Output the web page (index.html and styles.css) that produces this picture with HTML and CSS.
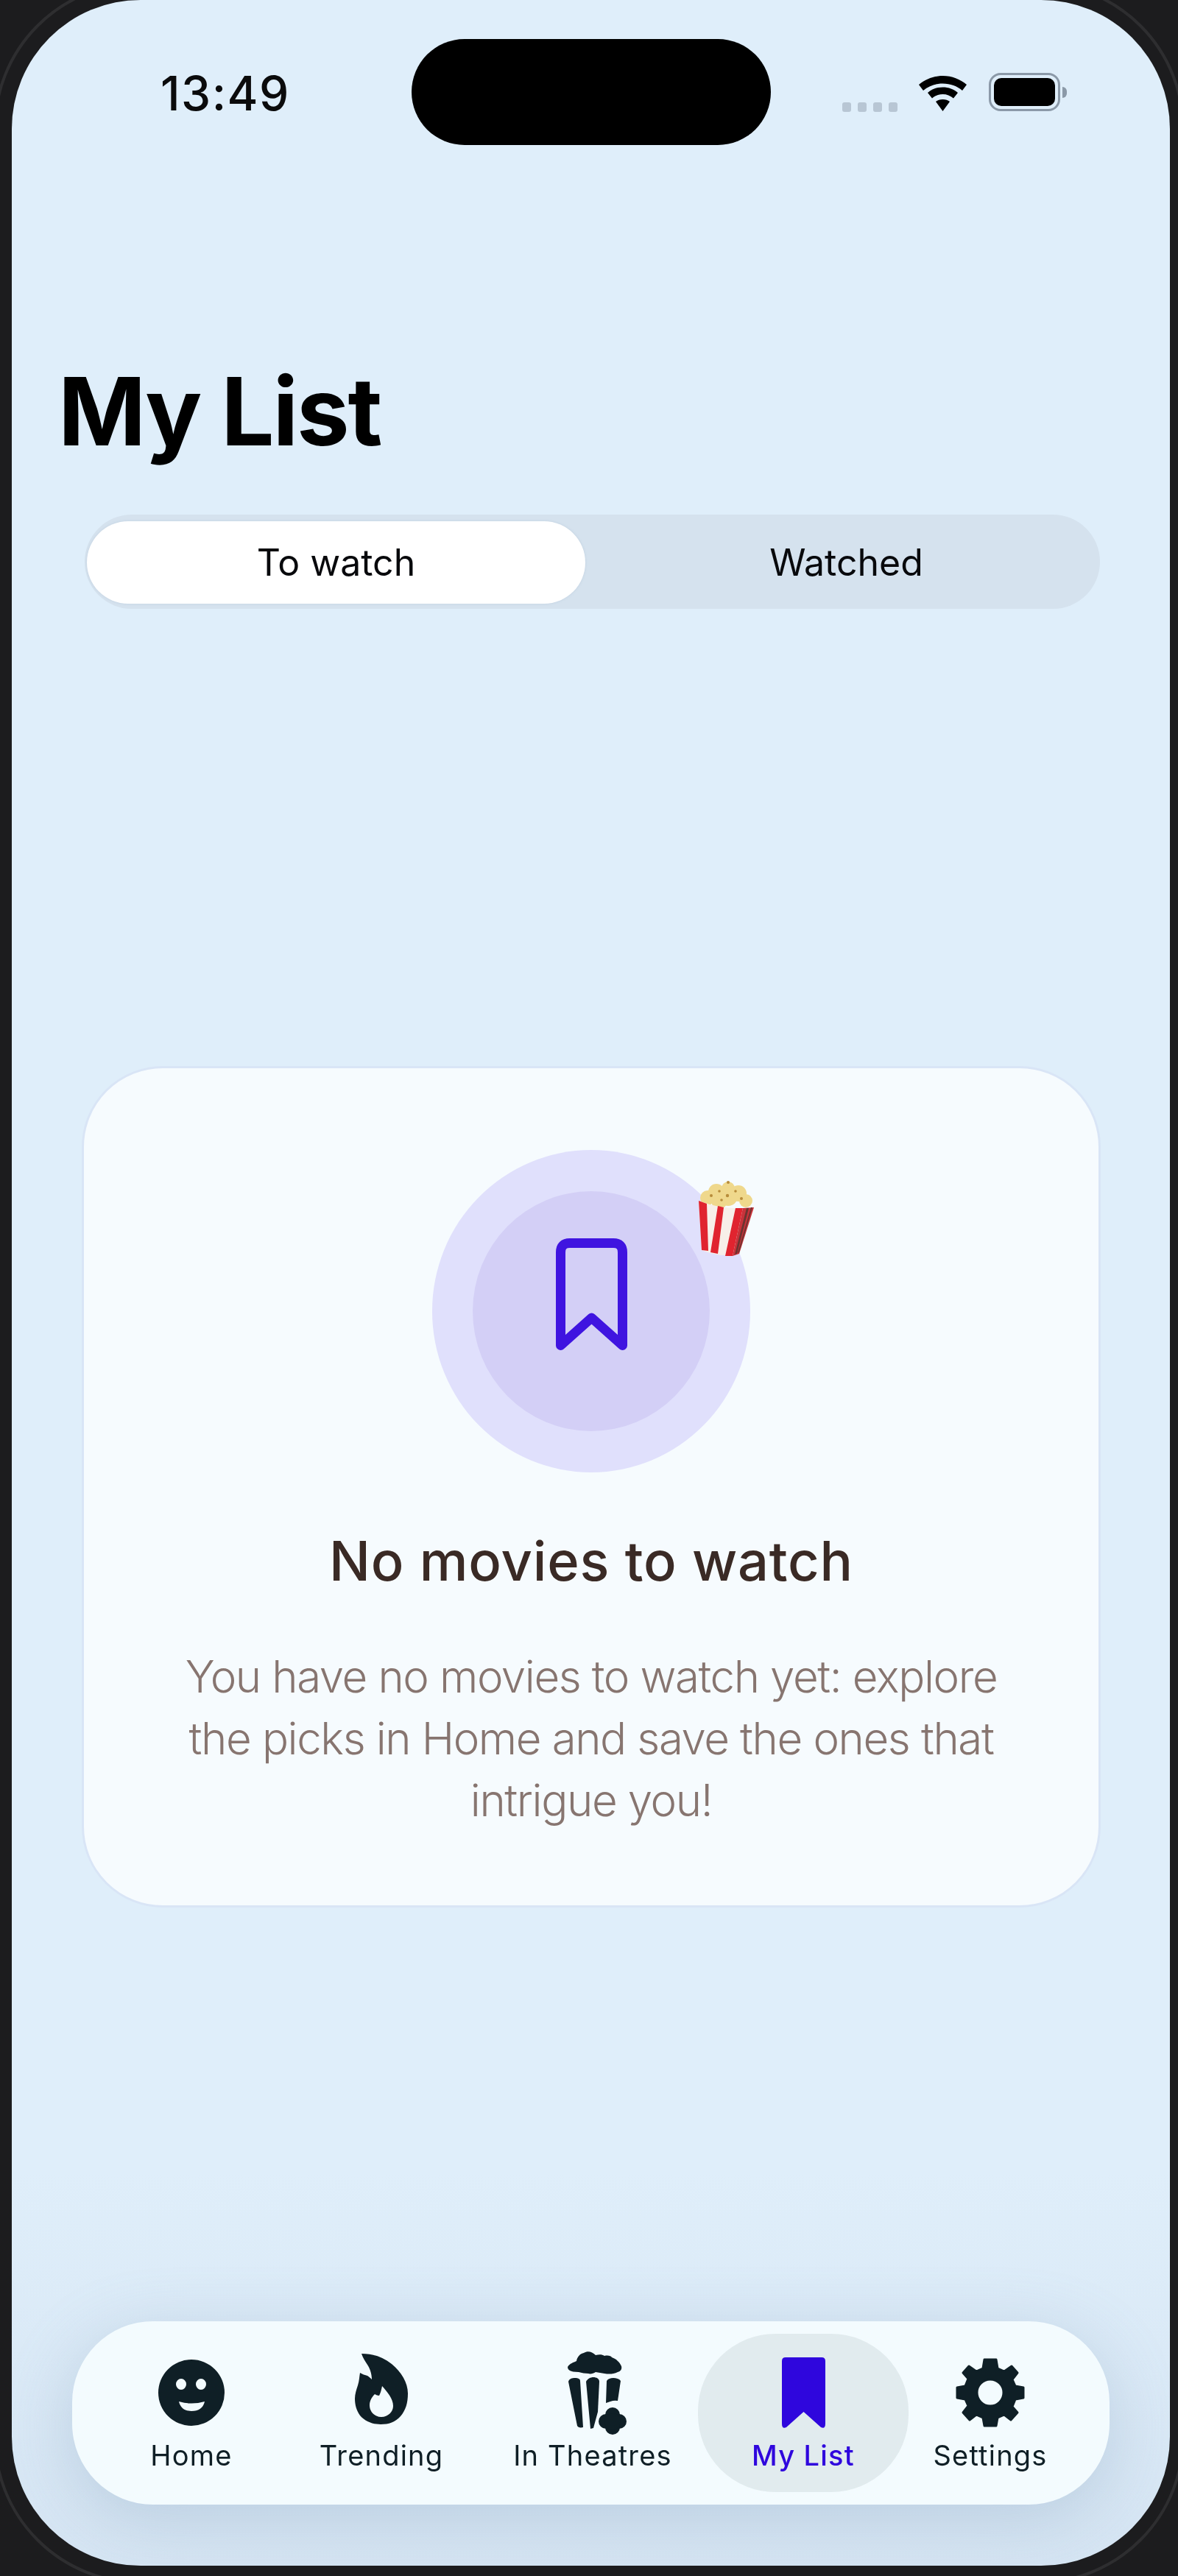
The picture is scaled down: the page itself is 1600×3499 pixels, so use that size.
FILE: index.html
```html
<!DOCTYPE html>
<html lang="en">
<head>
    <meta charset="UTF-8">
    <meta name="viewport" content="width=device-width, initial-scale=1.0">
    <title>My List</title>
    <link rel="stylesheet" href="styles.css">
</head>
<body>
    <div class="screen">
        <div class="status-bar">
            <span class="time">13:49</span>
            <div class="island"></div>
            <div class="status-icons">
                <div class="signal"><i></i><i></i><i></i><i></i></div>
                <svg class="wifi" viewBox="0 0 65 48"><path d="M32.500 0C20 0 9 4.500 0 12l6 8c7-6 16-9.500 26.500-9.500S52 14 59 20l6-8C56 4.500 45 0 32.500 0z"/><path d="M32.500 15.500c-8 0-15 2.500-20.500 7.500l6 7.500c4-3.500 9-5.500 14.500-5.500s10.500 2 14.500 5.500l6-7.500c-5.500-5-12.500-7.500-20.500-7.500z"/><path d="M32.500 32c-4 0-7 1-9.500 3l9.500 13 9.500-13c-2.500-2-5.500-3-9.500-3z"/></svg>
                <div class="battery"><div class="battery-level"></div></div>
                <div class="battery-nub"></div>
            </div>
        </div>

        <h1 class="title">My List</h1>

        <div class="segment">
            <div class="segment-item active">To watch</div>
            <div class="segment-item">Watched</div>
        </div>

        <div class="empty-card">
            <div class="halo">
                <div class="halo-inner">
                    <svg class="bookmark-outline" viewBox="0 0 97 152"><path d="M6.500 145.500V19Q6.500 6.500 19 6.500H78Q90.500 6.500 90.500 19V145.500L48.500 108z"/></svg>
                </div>
                <svg class="popcorn-emoji" viewBox="0 0 78 104">
                    <g fill="#efd88c">
                        <circle cx="14" cy="24" r="10"/><circle cx="26" cy="16" r="11"/><circle cx="42" cy="11" r="9"/><circle cx="42" cy="22" r="13"/><circle cx="56" cy="18" r="11"/><circle cx="66" cy="28" r="9"/><circle cx="30" cy="28" r="11"/>
                    </g>
                    <g fill="#b88c3a"><circle cx="19" cy="21" r="2"/><circle cx="30" cy="15" r="1.800"/><circle cx="41" cy="21" r="2.200"/><circle cx="52" cy="15" r="1.800"/><circle cx="33" cy="27" r="1.800"/><circle cx="60" cy="25" r="2"/><circle cx="42" cy="3" r="2"/></g>
                    <path d="M2 28Q38 42 77 37L57 100Q32 106 6 95z" fill="#f7efe9"/>
                    <path d="M2 28L13 32 15 96 6 95zM28 35L36 37 28 100 18 98zM52 38L62 38 48 103 38 103z" fill="#e0242f"/>
                    <path d="M62 38L77 37 57 100 48 103z" fill="#c8323a"/>
                    <path d="M67 38L70 38 54 100 51 101zM73 37L75 37 57 98 55 99z" fill="#6e3330"/>
                </svg>
            </div>
            <h2 class="empty-title">No movies to watch</h2>
            <p class="empty-text">You have no movies to watch yet: explore the picks in Home and save the ones that intrigue you!</p>
        </div>

        <nav class="tab-bar">
            <div class="tab">
                <svg class="tab-icon icon-home" viewBox="0 0 90 90"><path fill-rule="evenodd" d="M45 0a45 45 0 1 0 0 90a45 45 0 1 0 0-90zM31 26a7 7.500 0 1 1 0 15a7 7.500 0 1 1 0-15zM58 26a7 7.500 0 1 1 0 15a7 7.500 0 1 1 0-15zM28 57Q45 62 63 57Q60 70 45 70Q31 70 28 57z"/></svg>
                <span class="tab-label">Home</span>
            </div>
            <div class="tab">
                <svg class="tab-icon icon-flame" viewBox="0 0 72 97"><path fill-rule="evenodd" d="M9 1C24 1 37 5 50 15C63 26 72 40 72 55C72 68 69 78 62 86C55 94 46 97 35 97C24 97 14 93 7 85C2 78 0 70 0 62C0 56 2 50 4 44C6 38 6 32 7 27C10 29 14 30 17 31C19 32 21 34 23 36C23 28 20 20 17 16C14 11 11 7 9 1zM37 45C36 50 35 54 33 58C31 58 29 57 27 56C23 60 20 65 20 71C20 80 27 87 36 87C45 87 52 80 52 72C52 62 44 53 37 45z"/></svg>
                <span class="tab-label">Trending</span>
            </div>
            <div class="tab">
                <svg class="tab-icon icon-popcorn" viewBox="0 0 82 116">
                    <path d="M0 23C3 18 8 17 12 15C13 9 17 5 22 4C27 1 33 2 38 7C43 6 47 6 50 8C55 7 59 8 60 10C66 12 71 17 73 22C74 26 72 29 68 30C62 33 56 33 50 32C46 31 42 31 38 30C35 32 31 33 28 32C24 32 19 31 15 30C9 30 5 29 3 28C1 27 0 25 0 23z"/>
                    <path d="M1 43C2 39 6 38 10 38C14 38 17 39 17 42L21 105C17 106 14 105 13 103z"/>
                    <path d="M25 43C27 39 31 37 35 37C39 37 43 39 43 43L41 84L35 106L31 107z"/>
                    <path d="M53 42C55 39 58 38 62 38C66 38 70 39 72 42L68 69Q63 68 58 70Q55 71 52 72z"/>
                    <circle cx="61" cy="88" r="10"/><circle cx="52" cy="97" r="10"/><circle cx="70" cy="97" r="10"/><circle cx="61" cy="105" r="10"/><circle cx="61" cy="97" r="11"/>
                </svg>
                <span class="tab-label">In Theatres</span>
            </div>
            <div class="tab active">
                <svg class="tab-icon icon-bookmark" viewBox="0 0 59 97"><path d="M5 0H54Q59 0 59 5V90Q59 98 53 95L29.500 74L6 95Q0 98 0 90V5Q0 0 5 0z"/></svg>
                <span class="tab-label">My List</span>
            </div>
            <div class="tab">
                <svg class="tab-icon icon-gear" viewBox="0 0 94 94"><path fill-rule="evenodd" d="M39 2H55L57 14 66 18 76 11 84 20 77 29 81 38 92 40V54L81 56 77 66 84 74 75 84 66 77 57 81 55 92H39L37 81 28 77 19 84 10 74 17 65 13 56 2 54V40L13 38 17 28 10 20 18 11 28 18 37 14zM47 29a18 18 0 1 0 0 36a18 18 0 1 0 0-36z"/></svg>
                <span class="tab-label">Settings</span>
            </div>
        </nav>
    </div>
</body>
</html>
```

FILE: styles.css
```css
html, body {
    margin: 0;
    padding: 0;
}
body {
    position: relative;
    background-color: #1c1c1e;
    font-family: Inter, "Noto Sans", sans-serif;
    width: 1600px;
    height: 3499px;
    overflow: hidden;
}
/* faint bezel line, only shows in the corners */
body::before {
    content: "";
    position: absolute;
    left: -9px;
    top: -25px;
    width: 1618px;
    height: 3535px;
    border: 4px solid #2e2e30;
    border-radius: 200px;
    box-sizing: border-box;
}
.screen {
    box-sizing: border-box;
    position: relative;
    width: 1573px;
    height: 3485px;
    margin-left: 16px;
    padding-top: 53px;
    background: linear-gradient(#dfeefa 0, #dfeefa 2950px, #d6e5f3 3485px);
    border-radius: 175px;
    overflow: hidden;
    filter: blur(0.6px);
}

/* status bar */
.status-bar {
    display: flex;
    align-items: center;
    height: 144px;
}
.time {
    width: 173px;
    margin-left: 202px;
    margin-right: 168px;
    margin-top: 2px;
    font-size: 64px;
    font-weight: 500;
    letter-spacing: 1.5px;
    color: #0b0b0c;
}
.island {
    width: 488px;
    height: 144px;
    background-color: #000;
    border-radius: 72px;
}
.status-icons {
    display: flex;
    align-items: center;
    margin-left: 97px;
}
.signal {
    display: flex;
    gap: 9px;
    margin-top: 40px;
    margin-right: 29px;
}
.signal i {
    width: 12px;
    height: 13px;
    background-color: #b8c6d4;
    border-radius: 3px;
}
.wifi {
    width: 65px;
    height: 48px;
    margin-top: 4px;
    margin-right: 30px;
}
.battery {
    box-sizing: border-box;
    width: 97px;
    height: 52px;
    padding: 4px;
    border: 3px solid #8b99a8;
    border-radius: 16px;
}
.battery-level {
    height: 100%;
    background-color: #000;
    border-radius: 10px;
}
.battery-nub {
    width: 6px;
    height: 15px;
    margin-left: 3px;
    background-color: #8b99a8;
    border-radius: 0 7px 7px 0;
}

/* header */
.title {
    margin: 284px 0 0 63px;
    font-size: 128px;
    font-weight: 700;
    line-height: 155px;
    letter-spacing: -2.2px;
    color: #000;
}

/* segmented control */
.segment {
    display: flex;
    box-sizing: border-box;
    width: 1379px;
    height: 128px;
    margin: 63px 0 0 99px;
    padding: 9px 3px 7px;
    background-color: #d5e2ee;
    border-radius: 64px;
}
.segment-item {
    flex: 1;
    display: flex;
    align-items: center;
    justify-content: center;
    padding-left: 13px;
    font-size: 50px;
    color: #08090c;
}
.segment-item.active {
    flex: 0 0 677px;
    padding-left: 0;
    background-color: #fff;
    border-radius: 56px;
    box-shadow: 0 0 3px rgba(170, 190, 210, 0.5);
}

/* empty state */
.empty-card {
    box-sizing: border-box;
    display: flex;
    flex-direction: column;
    align-items: center;
    width: 1384px;
    height: 1143px;
    margin: 621px 0 0 95px;
    padding-top: 111px;
    background-color: #f6fbfe;
    border: 3px solid #d9e5f6;
    border-radius: 110px;
}
.halo {
    display: flex;
    align-items: center;
    justify-content: center;
    position: relative;
    flex: none;
    width: 432px;
    height: 438px;
    background-color: #e0e0fc;
    border-radius: 50%;
}
.halo-inner {
    display: flex;
    align-items: center;
    justify-content: center;
    width: 322px;
    height: 326px;
    background-color: #d3cff6;
    border-radius: 50%;
}
.bookmark-outline {
    width: 97px;
    height: 152px;
    margin-bottom: 46px;
    fill: none;
    stroke: #3f14e0;
    stroke-width: 13;
    stroke-linejoin: round;
}
.popcorn-emoji {
    position: absolute;
    top: 41px;
    right: -6px;
    width: 78px;
    height: 104px;
}
.empty-title {
    margin: 76px 0 0;
    font-size: 74px;
    font-weight: 500;
    line-height: 88px;
    letter-spacing: 0.8px;
    color: #3a2a25;
}
.empty-text {
    width: 1130px;
    margin: 71px 0 0;
    font-size: 60px;
    font-weight: 300;
    line-height: 84px;
    letter-spacing: -1.4px;
    text-align: center;
    color: #877570;
}

/* tab bar */
.tab-bar {
    display: grid;
    grid-template-columns: 228px 288px 286px 286px 222px;
    box-sizing: border-box;
    width: 1409px;
    height: 249px;
    margin: 562px 0 0 82px;
    padding: 17px 0 17px 48px;
    background-color: #f3fbfe;
    border-radius: 110px;
    box-shadow: 0 20px 90px rgba(120, 150, 180, 0.3);
}
.tab {
    display: flex;
    flex-direction: column;
    align-items: center;
    justify-content: flex-end;
    position: relative;
    padding-bottom: 27px;
    color: #0f1f26;
}
.tab.active {
    background-color: #e1ebee;
    border-radius: 105px;
    color: #2f06dd;
}
.tab.active .tab-label {
    font-weight: 500;
}
.tab-label {
    font-size: 38px;
    line-height: 46px;
    margin-top: 17px;
    letter-spacing: 1.2px;
}
.tab-icon {
    fill: currentColor;
}
.icon-home {
    width: 90px;
    height: 90px;
}
.icon-flame {
    width: 72px;
    height: 97px;
    margin-bottom: 2px;
}
.icon-popcorn {
    width: 82px;
    height: 116px;
    margin-left: 14px;
    margin-bottom: -13px;
}
.icon-bookmark {
    width: 59px;
    height: 97px;
    margin-bottom: -4px;
}
.icon-gear {
    width: 94px;
    height: 94px;
    margin-bottom: -2px;
    stroke: currentColor;
    stroke-width: 3;
    stroke-linejoin: round;
}
```
